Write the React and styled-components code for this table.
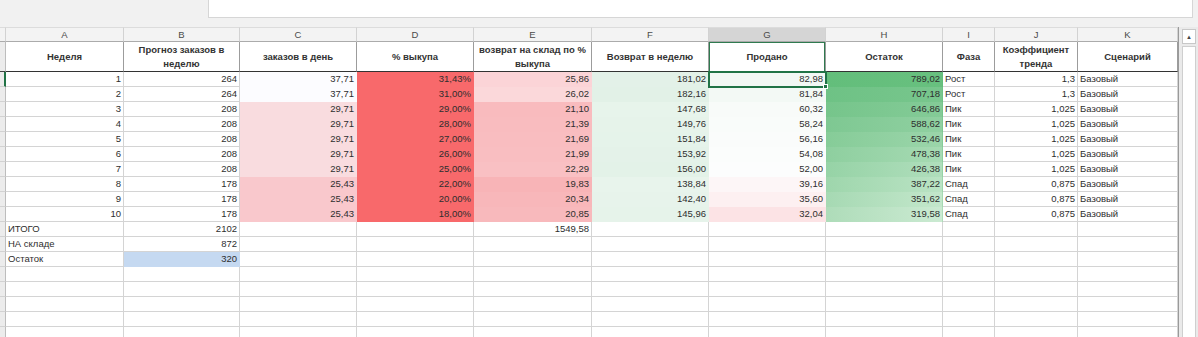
import React from "react";
import styled, { createGlobalStyle, css } from "styled-components";

const GlobalStyle = createGlobalStyle`
  html, body {
    margin: 0;
    padding: 0;
    background: #f1f1f1;
    overflow: hidden;
  }
  body {
    font-family: "Liberation Sans", Arial, sans-serif;
  }
`;

const Page = styled.div`
  width: 1198px;
  height: 337px;
  overflow: hidden;
  display: flex;
  flex-direction: column;
`;

const TopBar = styled.div`
  height: 27px;
  flex: none;
  display: flex;
  background: #f1f1f1;
  padding-left: 208px;
  padding-right: 5px;
`;

const FormulaBox = styled.div`
  flex: 1;
  height: 17px;
  background: #fff;
  border: 1px solid #d6d6d6;
  border-top: none;
`;

const Body = styled.div`
  display: flex;
  flex: 1;
  min-height: 0;
`;

const Grid = styled.div`
  display: grid;
  grid-template-columns: 6px 118px 116px 117px 117px 118px 117px 117px 117px 52px 83px 100px;
  grid-auto-rows: 15px;
  align-content: start;
  background: #fff;
  border-right: 1px solid #9a9a9a;
`;

const ColLetter = styled.div`
  height: 15px;
  box-sizing: border-box;
  display: flex;
  align-items: center;
  justify-content: center;
  font-size: 9.5px;
  color: #4a4a4a;
  background: ${(p) => (p.active ? "#d5d5d5" : "#f3f3f3")};
  border-right: 1px solid #d2d2d2;
  border-bottom: 1px solid #ababab;
  border-top: 1px solid #dcdcdc;
`;

const RowHead = styled.div`
  box-sizing: border-box;
  background: #ececec;
  border-bottom: 1px solid #d2d2d2;
  border-right: ${(p) => (p.active ? "2px solid #217346" : "1px solid #bdbdbd")};
  ${(p) =>
    p.tall &&
    css`
      grid-row: span 2;
      border-bottom: 1px solid #444;
    `}
`;

const HeadCell = styled.div`
  grid-row: span 2;
  box-sizing: border-box;
  display: flex;
  align-items: center;
  justify-content: center;
  text-align: center;
  padding: 0 3px;
  font-size: 9.5px;
  line-height: 14px;
  font-weight: bold;
  color: #333;
  border-right: 1px solid #9c9c9c;
  border-bottom: 1px solid #333;
  ${(p) =>
    p.active &&
    css`
      box-shadow: inset 1px 1px 0 0 #2f7a4f, inset -1px 0 0 0 #2f7a4f;
    `}
`;

const Cell = styled.div`
  position: relative;
  box-sizing: border-box;
  display: flex;
  align-items: flex-end;
  justify-content: ${(p) => (p.left ? "flex-start" : "flex-end")};
  padding: 0 2px 1px 2px;
  font-size: 9.5px;
  line-height: 12px;
  color: #2e2e2e;
  white-space: nowrap;
  background: ${(p) => p.fill || "#fff"};
  border-right: 1px solid ${(p) => (p.fill ? "transparent" : "#d4d4d4")};
  border-bottom: 1px solid ${(p) => (p.fill ? "transparent" : "#d4d4d4")};
  ${(p) =>
    p.selected &&
    css`
      outline: 2px solid #217346;
      outline-offset: -1px;
      z-index: 2;
      &::after {
        content: "";
        position: absolute;
        right: -3px;
        bottom: -3px;
        width: 5px;
        height: 5px;
        background: #217346;
        border: 1px solid #fff;
        box-sizing: border-box;
      }
    `}
`;

const ScrollBar = styled.div`
  flex: 1;
  display: flex;
  flex-direction: column;
  background: #eaeaea;
  padding: 2px 2px 0 3px;
  gap: 2px;
`;

const ArrowButton = styled.div`
  height: 13px;
  background: #fff;
  border: 1px solid #c8c8c8;
  display: flex;
  align-items: center;
  justify-content: center;
  font-size: 6px;
  color: #444;
`;

const Track = styled.div`
  flex: 1;
  background: #fff;
  border: 1px solid #cfcfcf;
  border-bottom: none;
`;

const letters = ["A", "B", "C", "D", "E", "F", "G", "H", "I", "J", "K"];

const headers = [
  "Неделя",
  "Прогноз заказов в неделю",
  "заказов в день",
  "% выкупа",
  "возврат на склад по % выкупа",
  "Возврат в неделю",
  "Продано",
  "Остаток",
  "Фаза",
  "Коэффициент тренда",
  "Сценарий",
];

const cFill = ["#fcfcff", "#fcfcff", "#f9dcdf", "#f9dcdf", "#f9dcdf", "#f9dcdf", "#f9dcdf", "#f9c8cc", "#f9c8cc", "#f9c8cc"];
const eFill = ["#fbd4d7", "#fbd8da", "#f9bbbe", "#f9bcbf", "#f9bdc0", "#f9bec1", "#f9c0c3", "#f8b4b7", "#f8b7ba", "#f8b9bc"];
const fFill = ["#e3f1e8", "#e2f1e7", "#e7f4eb", "#e6f3ea", "#e5f3ea", "#e4f2e9", "#e3f2e8", "#e8f4ec", "#e7f3eb", "#e6f3ea"];
const gFill = ["#f2f8f4", "#f3f9f5", "#f8fbf9", "#f9fcfa", "#fafcfb", "#fbfdfc", "#fcfdfd", "#fdf6f7", "#fdf0f1", "#fce3e5"];
const hFill = [
  ["#63be7b", "#68c07f"],
  ["#6ec285", "#78c68d"],
  ["#76c58b", "#84cb97"],
  ["#7ec892", "#90d0a1"],
  ["#86cc98", "#9bd5aa"],
  ["#8ecf9f", "#a6dab3"],
  ["#96d3a6", "#b0debc"],
  ["#9ed6ac", "#bae3c4"],
  ["#a6d9b3", "#c3e7cb"],
  ["#aedcb9", "#cbead2"],
];

const rows = [
  [1, 264, "37,71", "31,43%", "25,86", "181,02", "82,98", "789,02", "Рост", "1,3", "Базовый"],
  [2, 264, "37,71", "31,00%", "26,02", "182,16", "81,84", "707,18", "Рост", "1,3", "Базовый"],
  [3, 208, "29,71", "29,00%", "21,10", "147,68", "60,32", "646,86", "Пик", "1,025", "Базовый"],
  [4, 208, "29,71", "28,00%", "21,39", "149,76", "58,24", "588,62", "Пик", "1,025", "Базовый"],
  [5, 208, "29,71", "27,00%", "21,69", "151,84", "56,16", "532,46", "Пик", "1,025", "Базовый"],
  [6, 208, "29,71", "26,00%", "21,99", "153,92", "54,08", "478,38", "Пик", "1,025", "Базовый"],
  [7, 208, "29,71", "25,00%", "22,29", "156,00", "52,00", "426,38", "Пик", "1,025", "Базовый"],
  [8, 178, "25,43", "22,00%", "19,83", "138,84", "39,16", "387,22", "Спад", "0,875", "Базовый"],
  [9, 178, "25,43", "20,00%", "20,34", "142,40", "35,60", "351,62", "Спад", "0,875", "Базовый"],
  [10, 178, "25,43", "18,00%", "20,85", "145,96", "32,04", "319,58", "Спад", "0,875", "Базовый"],
];

const summary = [
  ["ИТОГО", "2102", "", "", "1549,58"],
  ["НА складе", "872"],
  ["Остаток", "320"],
];

function fillFor(col, i) {
  if (col === 2) return cFill[i];
  if (col === 3) return "#f8696b";
  if (col === 4) return eFill[i];
  if (col === 5) return fFill[i];
  if (col === 6) return gFill[i];
  if (col === 7) return `linear-gradient(90deg, ${hFill[i][0]}, ${hFill[i][1]})`;
  return null;
}

function App() {
  return (
    <Page>
      <GlobalStyle />
      <TopBar>
        <FormulaBox />
      </TopBar>
      <Body>
        <Grid>
          <ColLetter />
          {letters.map((l) => (
            <ColLetter key={l} active={l === "G"}>
              {l}
            </ColLetter>
          ))}

          <RowHead tall />
          {headers.map((h, i) => (
            <HeadCell key={h} active={i === 6}>
              {h}
            </HeadCell>
          ))}

          {rows.map((r, i) => (
            <React.Fragment key={i}>
              <RowHead active={i === 0} />
              {r.map((v, c) => (
                <Cell key={c} fill={fillFor(c, i)} left={c === 8 || c === 10} selected={i === 0 && c === 6}>
                  {v}
                </Cell>
              ))}
            </React.Fragment>
          ))}

          {summary.map((r, i) => (
            <React.Fragment key={"s" + i}>
              <RowHead />
              {letters.map((_, c) => (
                <Cell key={c} left={c === 0} fill={i === 2 && c === 1 ? "#c5d9f1" : null}>
                  {r[c] || ""}
                </Cell>
              ))}
            </React.Fragment>
          ))}

          {[0, 1, 2, 3, 4].map((i) => (
            <React.Fragment key={"e" + i}>
              <RowHead />
              {letters.map((_, c) => (
                <Cell key={c} />
              ))}
            </React.Fragment>
          ))}
        </Grid>
        <ScrollBar>
          <ArrowButton>▲</ArrowButton>
          <Track />
        </ScrollBar>
      </Body>
    </Page>
  );
}

export default App;
